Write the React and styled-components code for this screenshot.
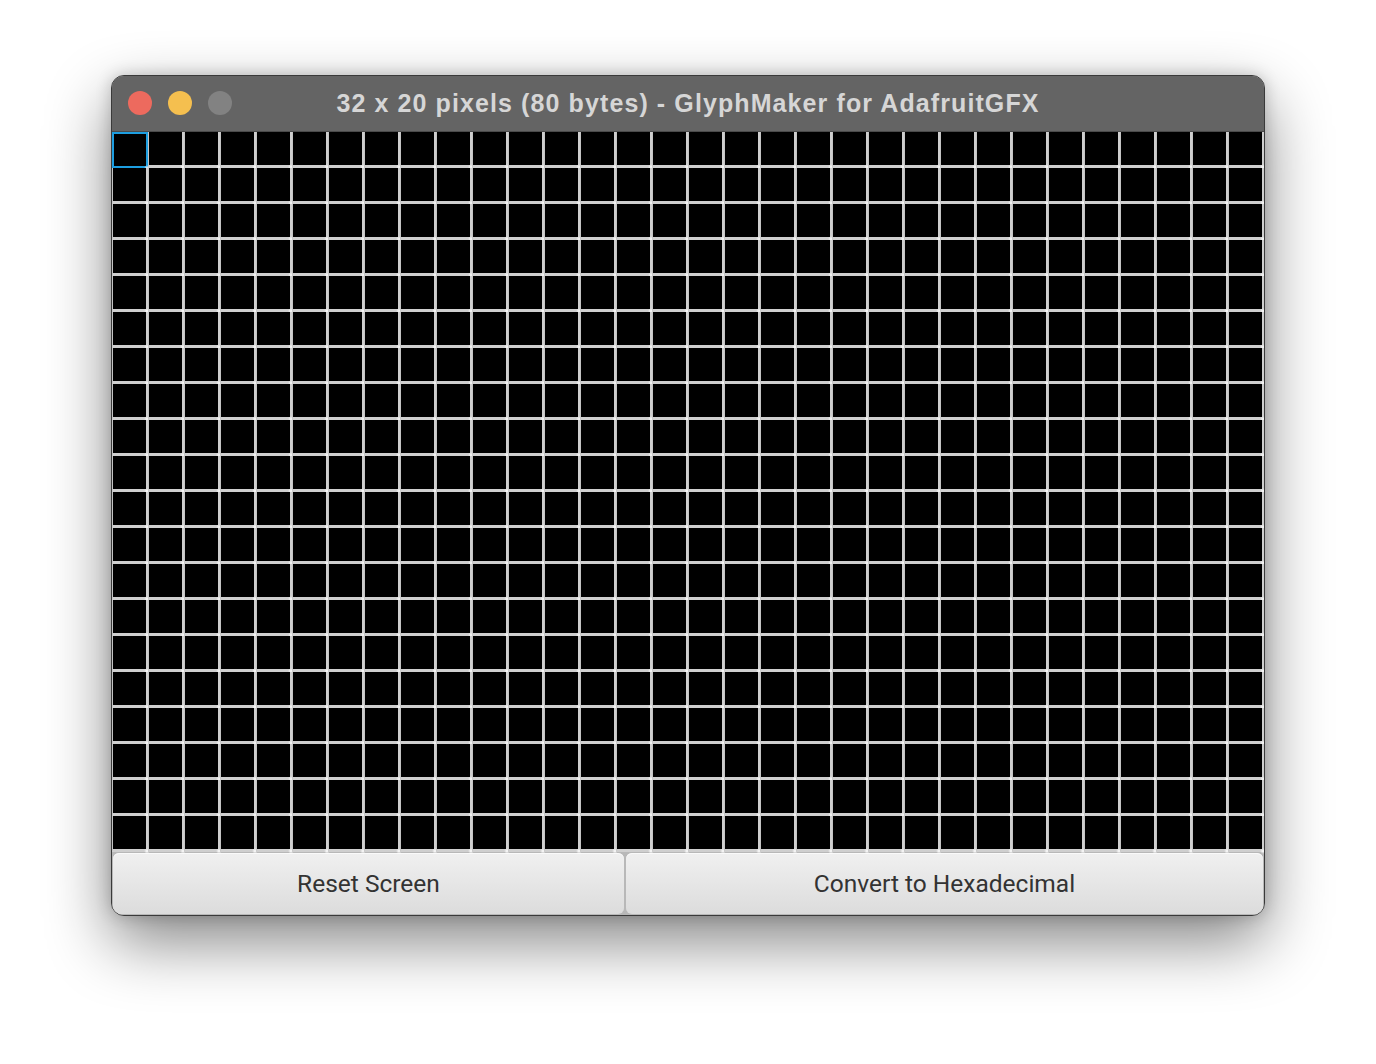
import React from "react";
import styled, { createGlobalStyle } from "styled-components";

const COLS = 32;
const ROWS = 20;

const GlobalStyle = createGlobalStyle`
  html, body {
    margin: 0;
    padding: 0;
    background: #ffffff;
  }
  * {
    box-sizing: border-box;
  }
`;

const App = () => {
  const cells = [];
  for (let i = 0; i < COLS * ROWS; i++) {
    cells.push(<St.Cell key={i} $focused={i === 0} />);
  }
  return (
    <>
      <GlobalStyle />
      <St.Page>
        <St.Window>
          <St.TitleBar>
            <St.Lights>
              <St.Light $color="#ed6a5e" />
              <St.Light $color="#f5bf4f" />
              <St.Light $color="#828282" />
            </St.Lights>
            <St.Title>32 x 20 pixels (80 bytes) - GlyphMaker for AdafruitGFX</St.Title>
          </St.TitleBar>
          <St.Grid>{cells}</St.Grid>
          <St.ButtonRow>
            <St.Button $width="511px">Reset Screen</St.Button>
            <St.Button>Convert to Hexadecimal</St.Button>
          </St.ButtonRow>
        </St.Window>
      </St.Page>
    </>
  );
};

export default App;

const St = {
  Page: styled.div`
    width: 1376px;
    height: 1064px;
    padding: 75px 0 0 111px;
    background: #ffffff;
  `,
  Window: styled.div`
    width: 1154px;
    height: 841px;
    display: flex;
    flex-direction: column;
    border: 1px solid #3a3a3a;
    border-radius: 13px;
    overflow: hidden;
    background: #bcbcbc;
    box-shadow: 0 26px 64px rgba(0, 0, 0, 0.48), 0 0 16px rgba(0, 0, 0, 0.2);
  `,
  TitleBar: styled.div`
    position: relative;
    height: 56px;
    flex-shrink: 0;
    display: flex;
    align-items: center;
    justify-content: center;
    background: #646464;
    border-bottom: 1px solid #4a4a4a;
  `,
  Lights: styled.div`
    position: absolute;
    left: 16px;
    top: 15px;
    display: flex;
    gap: 16px;
  `,
  Light: styled.div`
    width: 24px;
    height: 24px;
    border-radius: 50%;
    background: ${({ $color }) => $color};
  `,
  Title: styled.div`
    font-family: "Liberation Sans", Arial, sans-serif;
    font-weight: 700;
    font-size: 25px;
    color: #d6d6d6;
    letter-spacing: 1.1px;
  `,
  Grid: styled.div`
    height: 720px;
    flex-shrink: 0;
    display: grid;
    grid-template-columns: repeat(${COLS}, 36px);
    grid-template-rows: repeat(${ROWS}, 36px);
    background: #cfcfcf;
  `,
  Cell: styled.div`
    position: relative;
    background: #000000;
    border-right: 2px solid #cfcfcf;
    border-bottom: 3px solid #cfcfcf;
    border-left: 1px solid #c4c4c4;
    &::after {
      content: "";
      position: absolute;
      right: -4px;
      bottom: -5px;
      width: 6px;
      height: 6px;
      border-radius: 50%;
      background: radial-gradient(circle, #ffffff 0%, rgba(255, 255, 255, 0) 70%);
    }
    ${({ $focused }) =>
      $focused &&
      `
      border: 2px solid #1d9ee0;
    `}
  `,
  ButtonRow: styled.div`
    flex: 1;
    display: flex;
    gap: 2px;
    padding: 1px;
    background: #b8b8b8;
  `,
  Button: styled.button`
    ${({ $width }) => ($width ? `width: ${$width};` : "flex: 1;")}
    height: 100%;
    border: none;
    border-radius: 6px;
    background: linear-gradient(#f0f0f0, #dcdcdc);
    box-shadow: inset 0 1px 0 #fafafa;
    font-family: "Roboto", "Liberation Sans", sans-serif;
    font-size: 24.5px;
    color: #333333;
    padding: 0;
  `,
};
